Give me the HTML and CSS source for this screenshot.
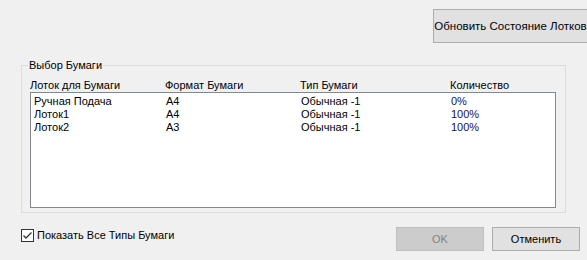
FILE: index.html
```html
<!DOCTYPE html>
<html lang="ru">

<head>
    <meta charset="utf-8">
    <title>Выбор Бумаги</title>
    <link rel="stylesheet" href="styles.css">
</head>

<body>
    <div class="dialog">
        <div class="top-bar">
            <button class="btn btn-refresh"><span>Обновить Состояние Лотков</span></button>
        </div>

        <fieldset class="group">
            <legend>Выбор Бумаги</legend>
            <div class="cols cols-head">
                <span>Лоток для Бумаги</span>
                <span>Формат Бумаги</span>
                <span>Тип Бумаги</span>
                <span>Количество</span>
            </div>
            <div class="list">
                <div class="cols row">
                    <span>Ручная Подача</span>
                    <span>A4</span>
                    <span>Обычная -1</span>
                    <span class="qty">0%</span>
                </div>
                <div class="cols row">
                    <span>Лоток1</span>
                    <span>A4</span>
                    <span>Обычная -1</span>
                    <span class="qty">100%</span>
                </div>
                <div class="cols row">
                    <span>Лоток2</span>
                    <span>A3</span>
                    <span>Обычная -1</span>
                    <span class="qty">100%</span>
                </div>
            </div>
        </fieldset>

        <div class="bottom-bar">
            <label class="check">
                <span class="box">
                    <svg width="11" height="11" viewBox="0 0 11 11">
                        <path d="M1.5 5.5 L4 8 L9.5 2.5" fill="none" stroke="#333" stroke-width="1.3"/>
                    </svg>
                </span>
                Показать Все Типы Бумаги
            </label>
            <div class="actions">
                <button class="btn btn-ok" disabled>OK</button>
                <button class="btn">Отменить</button>
            </div>
        </div>
    </div>
</body>

</html>
```

FILE: styles.css
```css
* {
    box-sizing: border-box;
}

body {
    margin: 0;
    background-color: #f0f0f0;
    font-family: 'Liberation Sans', Arial, sans-serif;
    font-size: 11px;
    line-height: 13px;
    color: #000;
}

.dialog {
    width: 587px;
    height: 260px;
    overflow: hidden;
}

.top-bar {
    display: flex;
    justify-content: flex-end;
    padding-top: 9px;
    margin-right: -1px;
}

.btn {
    display: flex;
    align-items: center;
    justify-content: center;
    height: 24px;
    width: 88px;
    padding: 0;
    border: 1px solid #adadad;
    background-color: #e1e1e1;
    font-family: inherit;
    font-size: 11px;
    color: #000;
    white-space: nowrap;
    overflow: hidden;
}

.btn-refresh {
    width: 155px;
    height: 34px;
    font-size: 11.5px;
}

.btn-refresh span {
    flex-shrink: 0;
}

.btn-ok {
    background-color: #cccccc;
    border-color: #bfbfbf;
    color: #838383;
}

.group {
    margin: 16px 0 0 21px;
    width: 545px;
    padding: 7px 9px 4px 8px;
    border: 1px solid #dcdcdc;
}

.group legend {
    margin-left: -2px;
    padding: 0 1px;
    line-height: 13px;
}

.cols {
    display: grid;
    grid-template-columns: 135px 135px 150px 1fr;
    height: 13px;
}

.list {
    height: 116px;
    border: 1px solid #828790;
    background-color: #fff;
    padding: 2px 0 0 3px;
}

.row {
    grid-template-columns: 132px 135px 150px 1fr;
}

.qty {
    color: #22104e;
}

.bottom-bar {
    display: flex;
    align-items: flex-start;
    padding: 14px 7px 0 21px;
}

.check {
    display: flex;
    align-items: center;
    gap: 3px;
    margin-top: 2px;
}

.box {
    display: flex;
    align-items: center;
    justify-content: center;
    width: 13px;
    height: 13px;
    border: 1px solid #333;
    background-color: #fff;
}

.actions {
    display: flex;
    gap: 8px;
    margin-left: auto;
}
```
